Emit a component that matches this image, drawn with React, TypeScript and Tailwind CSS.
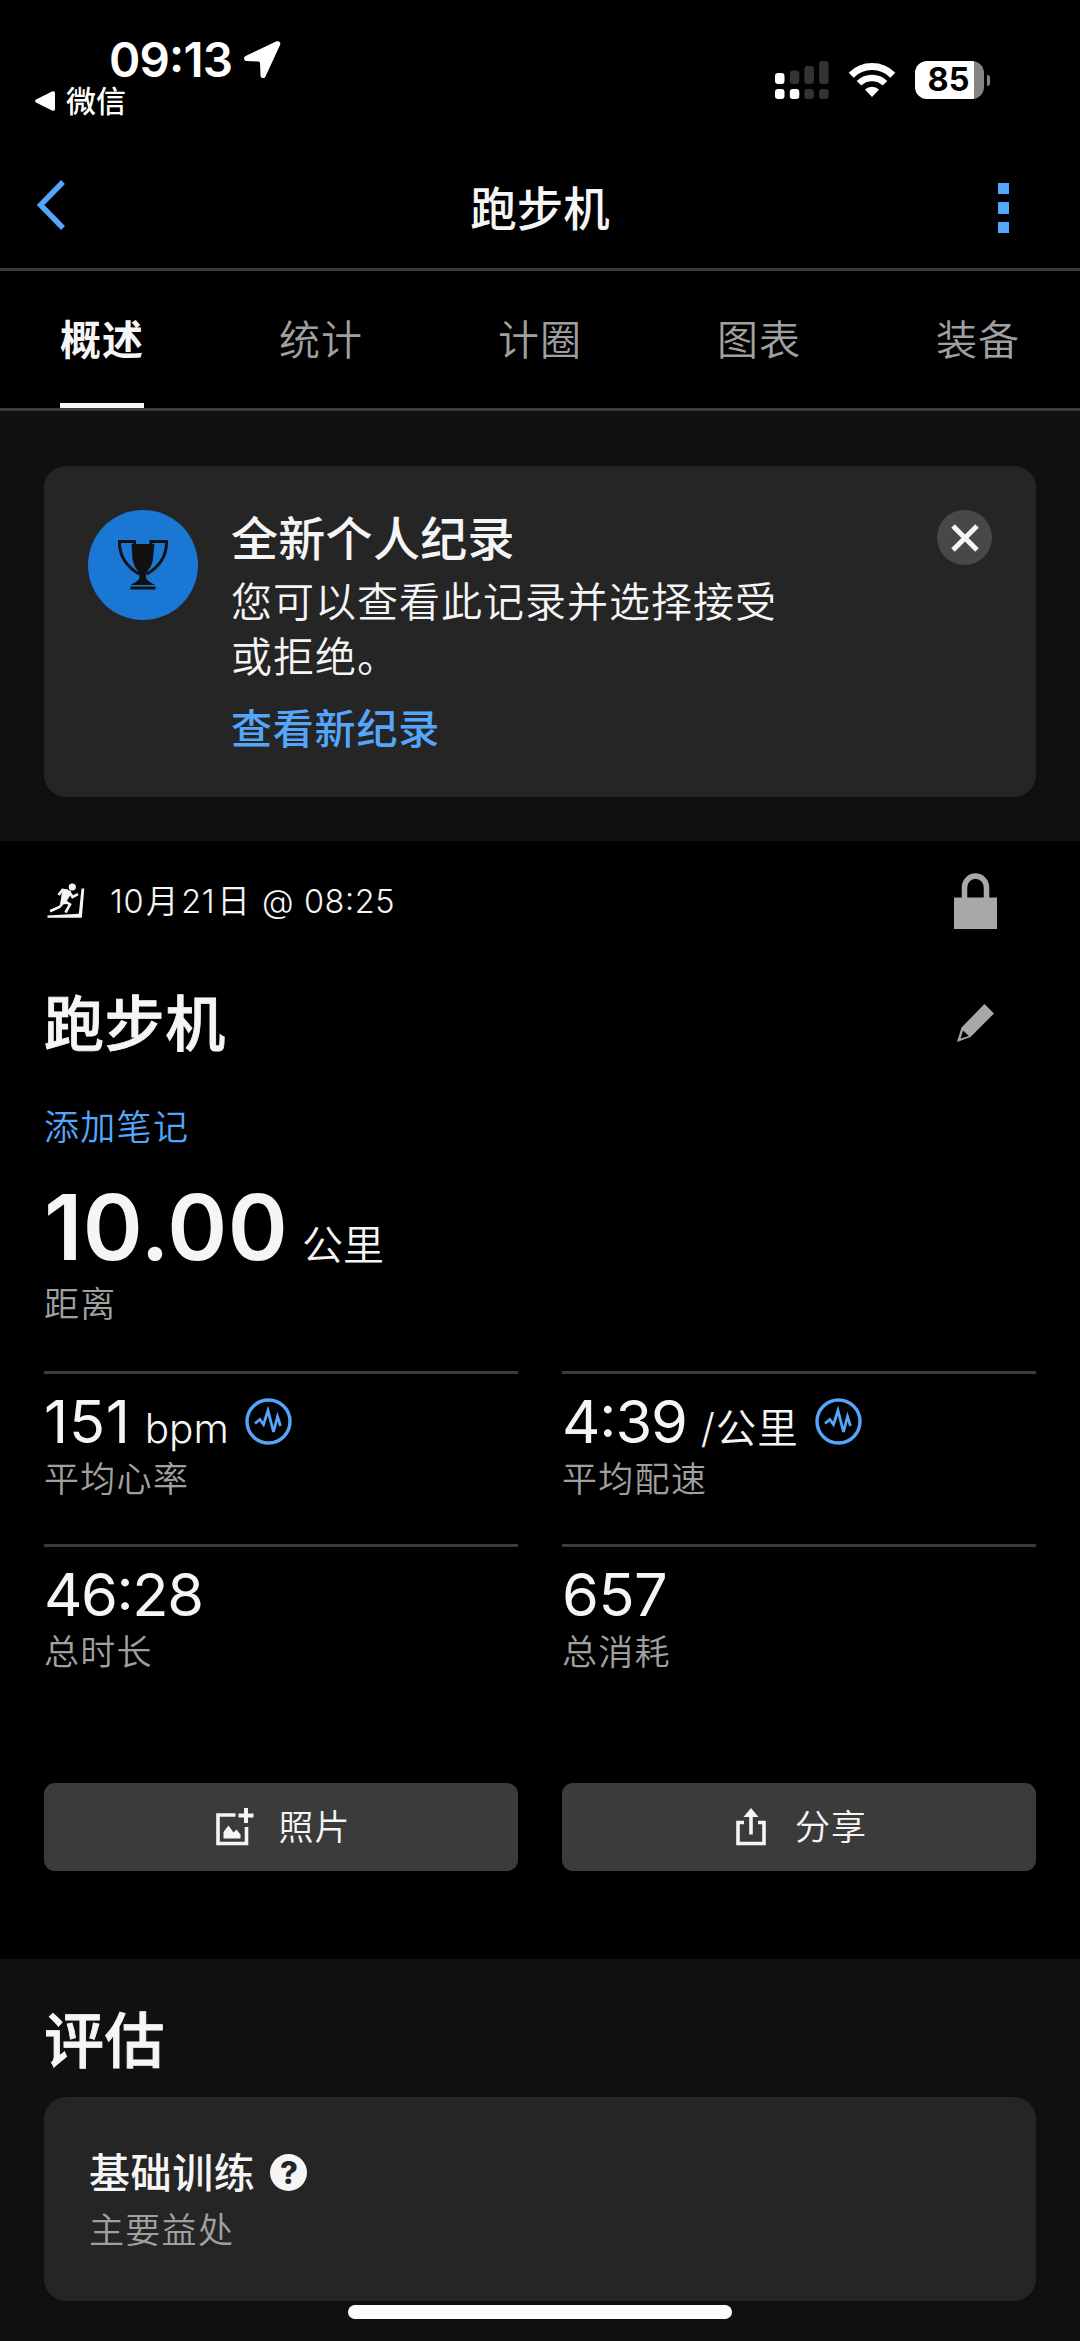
import { ReactNode, useState } from "react";

type Stat = {
  value: string;
  unit?: string;
  label: string;
  hasChart?: boolean;
  valueClass: string;
  unitClass?: string;
};

const tabs = ["概述", "统计", "计圈", "图表", "装备"];

const stats: Stat[] = [
  { value: "151", unit: "bpm", label: "平均心率", hasChart: true, valueClass: "tracking-[0.7px]" },
  {
    value: "4:39",
    unit: "/公里",
    label: "平均配速",
    hasChart: true,
    valueClass: "tracking-[-1.1px]",
    unitClass: "tracking-[0.9px]",
  },
  { value: "46:28", label: "总时长", valueClass: "tracking-[-1.4px]" },
  { value: "657", label: "总消耗", valueClass: "tracking-[-0.5px]" },
];

function StatusBar() {
  return (
    <div className="flex h-[148px] justify-between pr-[90px] pl-[35px] text-white">
      <div className="pt-[36px]">
        <div className="flex h-[48px] items-center gap-[12px] pl-[74px]">
          <span className="text-[47.5px] leading-[48px] font-semibold tracking-[-0.8px] [font-feature-settings:'case']">
            09:13
          </span>
          <svg width="37" height="38" viewBox="0 0 37 38" fill="currentColor">
            <path d="M32 .6C35-.6 37.200 1.200 36 4L21.500 35.500C20.500 38 16.500 37.500 16.500 34.500L16 22Q16 20.500 14.500 20.500L2.500 20C-.2 19.800-.9 16.600 1.600 15Z" />
          </svg>
        </div>
        <div className="flex h-[34px] items-center gap-[11px]">
          <svg width="20" height="20" viewBox="0 0 20 20" fill="currentColor">
            <path d="M1 8.500 17 .4Q20-.5 20 2V18Q20 20.500 17 19.500L1 11.500Q-.8 10 1 8.500Z" />
          </svg>
          <span className="text-[30px] leading-[34px] font-medium">微信</span>
        </div>
      </div>

      <div className="mt-[61px] flex h-[38px] items-center">
        <svg width="54" height="38" viewBox="0 0 54 38" fill="#fff">
          <rect x="0" y="12" width="9.500" height="11" rx="3" />
          <rect x="0" y="28" width="9.500" height="10" rx="3" />
          <rect x="14.800" y="28" width="9.500" height="10" rx="3" />
          <g fill="#333">
            <rect x="14.800" y="9.500" width="9.500" height="13.500" rx="3" />
            <rect x="29.400" y="5" width="9.500" height="18" rx="3" />
            <rect x="44.100" y="0" width="9.500" height="23" rx="3" />
            <rect x="29.400" y="28" width="9.500" height="10" rx="3" />
            <rect x="44.100" y="28" width="9.500" height="10" rx="3" />
          </g>
        </svg>
        <svg className="ml-[19px]" width="48" height="36" viewBox="0 0 48 36" fill="none" stroke="#fff">
          <path d="M3.200 13.200A29.500 29.500 0 0 1 44.800 13.200" strokeWidth="7" />
          <path d="M11 21.300A18.500 18.500 0 0 1 37 21.300" strokeWidth="6.500" />
          <path d="M17 27.500A10 10 0 0 1 31 27.500L24 35Z" fill="#fff" stroke="none" />
        </svg>
        <div className="ml-[19px] flex h-[38px] w-[69px] items-center justify-center rounded-[12px] bg-linear-to-r from-white from-86% to-[#858585] to-86%">
          <span className="pt-px pr-[2px] text-[32.5px] leading-none font-bold text-black">85</span>
        </div>
        <span className="ml-[3px] h-[11px] w-[3px] rounded-r-full bg-[#858585]" />
      </div>
    </div>
  );
}

function Header() {
  return (
    <header className="flex h-[123px] items-center justify-between border-b-3 border-[#3b3b3b] pr-[71px] pl-[37px]">
      <button type="button" aria-label="返回" className="-mt-[7px]">
        <svg width="46" height="50" viewBox="0 0 46 50" fill="none" stroke="#55a6fb" strokeWidth="5.400">
          <path d="M26 2 3.500 25 26 48" />
        </svg>
      </button>
      <h1 className="pt-[2px] pl-[34px] text-[46.500px] leading-none font-medium text-[#f5f5f5]">跑步机</h1>
      <button type="button" aria-label="更多" className="flex w-[46px] flex-col items-end gap-[8px]">
        <span className="size-[11.500px] bg-[#55a6fb]" />
        <span className="size-[11.500px] bg-[#55a6fb]" />
        <span className="size-[11.500px] bg-[#55a6fb]" />
      </button>
    </header>
  );
}

function Trophy() {
  return (
    <svg width="50" height="50" viewBox="0 0 50 50" fill="#111">
      <path d="M13.500 4H36.500L35 19Q34 26 29.500 31Q28 33 28 38Q29 41 37 45H12.500Q20.500 41 21.500 38Q21.500 33 20 31Q15.500 26 14.500 19Z" />
      <path d="M16.500 5V1.500H1.500Q1 22 21 34M33 5V1.500H48.500Q49 22 29 34" fill="none" stroke="#111" strokeWidth="3" />
      <path d="M12.500 46.500H37.500V49.500H12.500Z" />
    </svg>
  );
}

function RecordBanner({ onClose }: { onClose: () => void }) {
  return (
    <div className="flex h-[331px] items-start rounded-[22px] bg-[#252525] p-[44px] text-[#f5f5f5]">
      <div className="flex size-[110px] shrink-0 items-center justify-center rounded-full bg-[#1a77d3]">
        <Trophy />
      </div>
      <div className="ml-[33px] w-[570px] pt-px">
        <h2 className="text-[47px] leading-[56px] font-medium tracking-[0.3px]">全新个人纪录</h2>
        <p className="mt-2 text-[41px] leading-[55px] font-[350] tracking-[1px]">
          您可以查看此记录并选择接受或拒绝。
        </p>
        <a className="mt-[19px] block text-[41px] leading-[50px] font-medium tracking-[0.8px] text-[#55a6fb]">
          查看新纪录
        </a>
      </div>
      <button
        type="button"
        onClick={onClose}
        aria-label="关闭"
        className="ml-auto flex size-[55px] items-center justify-center rounded-full bg-[#484848]"
      >
        <svg width="28" height="28" viewBox="0 0 28 28" stroke="#f5f5f5" strokeWidth="5">
          <path d="M2 2 26 26M26 2 2 26" />
        </svg>
      </button>
    </div>
  );
}

function TreadmillIcon() {
  return (
    <svg width="38" height="36" viewBox="7 10 38 36" fill="#f5f5f5">
      <circle cx="32.300" cy="14" r="3.600" />
      <path d="M41.500 15.500H44.300L41.800 44.800H7.500V42.600L38.800 40.800Z" />
      <path
        d="M18.500 22 22.500 16.800 28 17.800M30 20 32.500 24 38 21.200M24.500 28 30 31.500 25.500 39.500M23 30 19.500 34 10 38.200"
        fill="none"
        stroke="#f5f5f5"
        strokeWidth="2.600"
      />
      <path d="M22.500 16 31 17.800 30.500 22 27 27.500 28 31 20 31.500Z" />
    </svg>
  );
}

function PulseIcon() {
  return (
    <svg width="47" height="47" viewBox="0 0 47 47" fill="none" stroke="#55a6fb">
      <circle cx="23.500" cy="23.500" r="21.500" strokeWidth="3.400" />
      <path d="M10 25.500 14.800 21.500 18.500 26.500 23 12.500 28.500 34 32.500 18.500 35.500 28" strokeWidth="2.800" />
    </svg>
  );
}

function StatCell({ stat }: { stat: Stat }) {
  return (
    <div className="h-[173px] border-t-3 border-[#3b3b3b] pt-3">
      <div className="flex h-[70px] items-center">
        <span className="flex items-baseline text-[#f5f5f5]">
          <span className={`text-[59.500px] leading-[70px] [font-feature-settings:'case'] ${stat.valueClass}`}>
            {stat.value}
          </span>
          {stat.unit && (
            <span className={`ml-[14px] text-[40.500px] leading-[50px] font-[350] ${stat.unitClass ?? ""}`}>
              {stat.unit}
            </span>
          )}
        </span>
        {stat.hasChart && (
          <span className="ml-[16px]">
            <PulseIcon />
          </span>
        )}
      </div>
      <div className="pt-px text-[35px] leading-[44px] font-[350] tracking-[1.3px] text-[#a0a0a0]">{stat.label}</div>
    </div>
  );
}

function ActionButton({ icon, children }: { icon: ReactNode; children: ReactNode }) {
  return (
    <button
      type="button"
      className="flex h-[88px] items-center justify-center gap-[24px] rounded-[11px] bg-[#3b3b3b] pl-[5px] text-[35px] font-[350] tracking-[1px] text-[#f5f5f5]"
    >
      {icon}
      <span className="pt-px">{children}</span>
    </button>
  );
}

export default function App() {
  const [activeTab, setActiveTab] = useState("概述");
  const [showBanner, setShowBanner] = useState(true);

  return (
    <div
      lang="zh-CN"
      className="flex h-[2341px] w-[1080px] flex-col overflow-hidden bg-black font-['Inter','Noto_Sans_CJK_SC',sans-serif]"
    >
      <StatusBar />
      <Header />

      <nav className="flex h-[140px] justify-between border-b-3 border-[#3b3b3b] px-[60px]">
        {tabs.map((tab) => (
          <button
            key={tab}
            type="button"
            onClick={() => setActiveTab(tab)}
            className={`w-[84px] border-b-[5px] pt-2 text-[41px] whitespace-nowrap tracking-[0.9px] ${
              tab === activeTab
                ? "border-[#f5f5f5] font-semibold text-[#f5f5f5]"
                : "border-transparent font-[350] text-[#a0a0a0]"
            }`}
          >
            {tab}
          </button>
        ))}
      </nav>

      <section className="bg-[#101010] px-[44px] pt-[55px] pb-[44px]">
        {showBanner && <RecordBanner onClose={() => setShowBanner(false)} />}
      </section>

      <section className="px-[44px] pt-8 pb-[88px]">
        <div className="flex h-[56px] items-center pr-[39px] pl-[3px] text-[#f5f5f5]">
          <TreadmillIcon />
          <span className="ml-[25px] pt-[3px] text-[32.500px] font-[350] tracking-[0.6px]">
            10<span className="px-[2px]">月</span>21<span className="px-[2px]">日</span> @{" "}
            <span className="[font-feature-settings:'case']">08:25</span>
          </span>
          <svg className="ml-auto" width="43" height="56" viewBox="0 0 43 56">
            <path d="M10.500 26V14.500A11 11.500 0 0 1 32.500 14.500V26" fill="none" stroke="#a8a8a8" strokeWidth="5.500" />
            <path d="M0 24.500H43V56H0Z" fill="#a8a8a8" />
          </svg>
        </div>

        <div className="mt-[55px] flex h-20 items-center justify-between pr-[42px]">
          <h2 className="text-[60px] leading-[80px] font-medium tracking-[0.6px] text-[#f5f5f5] [-webkit-text-stroke:0.8px]">
            跑步机
          </h2>
          <svg className="-mt-[3px]" width="37" height="38" viewBox="0 0 37 38" fill="#a8a8a8">
            <path d="M27.500 0 37 9.500 13.500 33 0 38 4.500 23.500Z" />
            <path d="M6 26.500 11.800 32 3.500 34.500Z" fill="#000" />
          </svg>
        </div>

        <a className="mt-[38px] block text-[35px] leading-[50px] font-[350] tracking-[1.3px] text-[#55a6fb]">添加笔记</a>

        <div className="mt-[30px] flex h-[90px] items-baseline text-[#f5f5f5]">
          <span className="text-[91px] leading-[90px] font-semibold tracking-[0.3px]">10.00</span>
          <span className="ml-[14px] text-[41px] leading-[50px] font-[350]">公里</span>
        </div>
        <div className="mt-[10px] text-[35px] leading-[44px] font-[350] tracking-[1.3px] text-[#a0a0a0]">距离</div>

        <div className="mt-[45px] grid grid-cols-2 gap-x-[44px]">
          {stats.map((stat) => (
            <StatCell key={stat.label} stat={stat} />
          ))}
        </div>

        <div className="mt-[66px] grid grid-cols-2 gap-x-[44px]">
          <ActionButton
            icon={
              <svg width="38" height="38" viewBox="0 0 38 38" fill="none" stroke="#f5f5f5">
                <path d="M19.500 7H2V35.500H30.500V19" strokeWidth="3.600" />
                <path d="M30 0V15M22.500 7.500H37.500" strokeWidth="4" />
                <path d="M7.500 30.500V24L12.500 17.500 17.500 24.500 20.500 21.500 24.500 26.500V30.500Z" fill="#f5f5f5" stroke="none" />
              </svg>
            }
          >
            照片
          </ActionButton>
          <ActionButton
            icon={
              <svg className="mr-[5px]" width="30" height="38" viewBox="0 0 30 38" fill="none" stroke="#f5f5f5">
                <path d="M8 14.500H2V35.500H28V14.500H22" strokeWidth="3.600" />
                <path d="M15 26.500V6" strokeWidth="3.600" />
                <path d="M15 0 22.500 9H7.500Z" fill="#f5f5f5" stroke="none" />
              </svg>
            }
          >
            分享
          </ActionButton>
        </div>
      </section>

      <section className="flex-1 bg-[#101010] px-[44px] pt-[42px]">
        <h2 className="text-[60px] leading-[80px] font-medium tracking-[0.5px] text-[#f5f5f5] [-webkit-text-stroke:0.8px]">
          评估
        </h2>
        <div className="mt-4 h-[204px] rounded-[22px] bg-[#252525] px-[45px] pt-12">
          <div className="flex h-[56px] items-center text-[41px] font-medium tracking-[0.6px] text-[#f5f5f5]">
            <span className="pt-[2px]">基础训练</span>
            <span className="-mt-px ml-[15px] flex size-[37px] items-center justify-center rounded-full bg-[#f5f5f5] text-[31px] leading-none font-extrabold tracking-normal text-[#252525]">
              ?
            </span>
          </div>
          <div className="mt-[6px] text-[35px] leading-[46px] font-[350] tracking-[1.3px] text-[#a0a0a0]">主要益处</div>
        </div>
        <div className="mx-auto mt-1 h-[14px] w-[384px] rounded-full bg-white" />
      </section>
    </div>
  );
}
